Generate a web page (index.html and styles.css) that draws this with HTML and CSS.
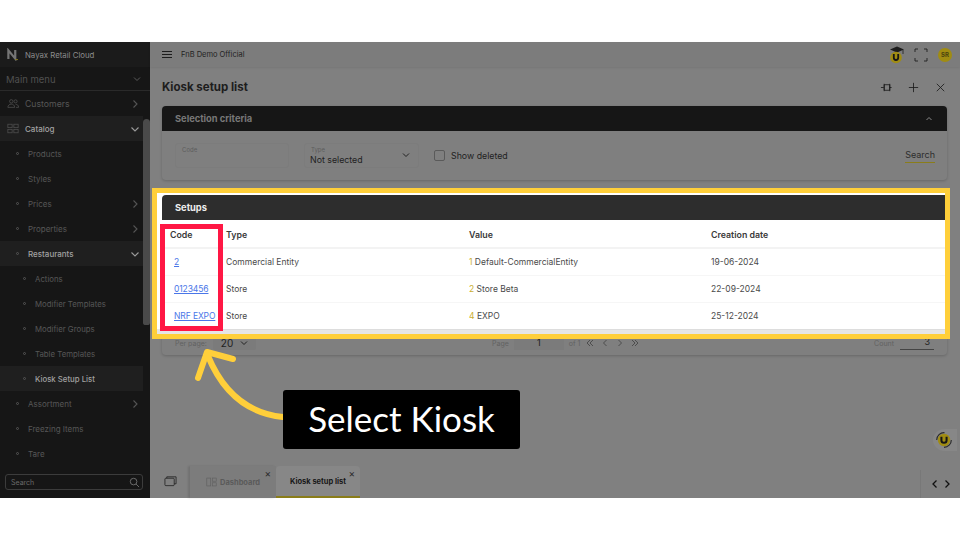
FILE: index.html
```html
<!DOCTYPE html>
<html lang="en">
<head>
<meta charset="utf-8">
<title>Kiosk setup list</title>
<link rel="stylesheet" href="styles.css">
</head>
<body>
<div class="app">
  <aside class="sidebar">
    <div class="brand">
      <svg class="brand-logo" viewBox="0 0 12 12"><path d="M1.500 11V1.500L9 10.500V1" fill="none" stroke="#757575" stroke-width="2.400"/><path d="M9 11.500h3" stroke="#8a7d1a" stroke-width="1"/></svg>
      <span>Nayax Retail Cloud</span>
    </div>
    <div class="mainmenu"><span>Main menu</span><svg class="chev" viewBox="0 0 10 10"><path d="M2 3.500l3 3 3-3"/></svg></div>
    <nav class="menu">
      <div class="item top"><svg class="mi" viewBox="0 0 14 12"><circle cx="5" cy="3.500" r="2"/><circle cx="10" cy="3.500" r="1.800"/><path d="M1 10.500c0-5 8-5 8 0zM10 7c2 0 3.500 1 3.500 3.500h-3"/></svg><span>Customers</span><svg class="arrow" viewBox="0 0 10 10"><path d="M3.500 1.500l3.500 3.500-3.500 3.500"/></svg></div>
      <div class="item top open"><svg class="mi" viewBox="0 0 14 12"><rect x="1" y="1" width="5" height="4"/><rect x="8" y="1" width="5" height="4"/><rect x="1" y="7" width="5" height="4"/><rect x="8" y="7" width="5" height="4"/></svg><span>Catalog</span><svg class="arrow bright" viewBox="0 0 10 10"><path d="M1.500 3.500l3.500 3.500 3.500-3.500"/></svg></div>
      <div class="item l1"><i></i><span>Products</span></div>
      <div class="item l1"><i></i><span>Styles</span></div>
      <div class="item l1"><i></i><span>Prices</span><svg class="arrow" viewBox="0 0 10 10"><path d="M3.500 1.500l3.500 3.500-3.500 3.500"/></svg></div>
      <div class="item l1"><i></i><span>Properties</span><svg class="arrow" viewBox="0 0 10 10"><path d="M3.500 1.500l3.500 3.500-3.500 3.500"/></svg></div>
      <div class="item l1 open"><i></i><span>Restaurants</span><svg class="arrow bright" viewBox="0 0 10 10"><path d="M1.500 3.500l3.500 3.500 3.500-3.500"/></svg></div>
      <div class="item l2"><i></i><span>Actions</span></div>
      <div class="item l2"><i></i><span>Modifier Templates</span></div>
      <div class="item l2"><i></i><span>Modifier Groups</span></div>
      <div class="item l2"><i></i><span>Table Templates</span></div>
      <div class="item l2 open"><i></i><span>Kiosk Setup List</span></div>
      <div class="item l1"><i></i><span>Assortment</span><svg class="arrow" viewBox="0 0 10 10"><path d="M3.500 1.500l3.500 3.500-3.500 3.500"/></svg></div>
      <div class="item l1"><i></i><span>Freezing Items</span></div>
      <div class="item l1"><i></i><span>Tare</span></div>
      <div class="scrollbar"></div>
    </nav>
    <div class="side-search"><span>Search</span><svg viewBox="0 0 12 12"><circle cx="5" cy="5" r="3.600"/><path d="M7.700 7.700L11 11"/></svg></div>
  </aside>
  <div class="content">
    <header class="topbar">
      <div class="burger"><b></b><b></b><b></b></div>
      <span class="org">FnB Demo Official</span>
      <div class="top-icons">
        <svg class="cap" viewBox="0 0 16 18"><path d="M1 3.500l7-3 7 3-7 3z" fill="#1d1d1d" stroke="none"/><path d="M14 4v4" stroke="#1d1d1d" stroke-width=".8"/><circle cx="7" cy="11.500" r="5.800" fill="#a08c12" stroke="none"/><path d="M4.800 8v3.800a2.200 2.200 0 004.400 0V8" fill="none" stroke="#161616" stroke-width="1.800"/></svg>
        <svg class="full" viewBox="0 0 14 14"><path d="M1 4V1h3M10 1h3v3M13 10v3h-3M4 13H1v-3"/></svg>
        <span class="avatar">SR</span>
      </div>
    </header>
    <main class="main">
      <div class="title-row">
        <h1>Kiosk setup list</h1>
        <div class="actions">
          <svg viewBox="0 0 14 14"><path d="M1 7h3M4.500 4h6v6h-6zM10.500 3v8M4.500 3v8M10.500 7h2"/></svg>
          <svg viewBox="0 0 14 14"><path d="M7 2v10M2 7h10"/></svg>
          <svg viewBox="0 0 14 14"><path d="M3 3l8 8M11 3l-8 8"/></svg>
        </div>
      </div>
      <section class="card criteria">
        <div class="card-head dark"><span>Selection criteria</span><svg viewBox="0 0 10 10"><path d="M2.500 6l2.500-2.500L7.500 6"/></svg></div>
        <div class="filters">
          <div class="field code"><label>Code</label></div>
          <div class="field type"><label>Type</label><span>Not selected</span><svg viewBox="0 0 10 10"><path d="M2 3.500l3 3 3-3"/></svg></div>
          <div class="check"><i></i><span>Show deleted</span></div>
          <span class="search-btn">Search</span>
        </div>
      </section>
      <section class="card setups">
        <div class="pager">
          <div class="pp"><span class="muted">Per page:</span><span class="pp-box">20<svg viewBox="0 0 10 10"><path d="M2 3.500l3 3 3-3"/></svg></span></div>
          <div class="pages"><span class="muted">Page</span><span class="page-box">1</span><span class="muted">of 1</span>
            <svg viewBox="0 0 10 10"><path d="M5 2L2 5l3 3M8 2L5 5l3 3"/></svg>
            <svg viewBox="0 0 10 10"><path d="M6.500 2l-3 3 3 3"/></svg>
            <svg viewBox="0 0 10 10"><path d="M3.500 2l3 3-3 3"/></svg>
            <svg viewBox="0 0 10 10"><path d="M2 2l3 3-3 3M5 2l3 3-3 3"/></svg>
          </div>
          <div class="count"><span class="muted">Count</span><span class="count-box">3</span></div>
        </div>
        <div class="spot"></div>
        <div class="card-head light"><span>Setups</span></div>
        <table class="grid">
          <thead><tr><th class="c1">Code</th><th class="c2">Type</th><th class="c3">Value</th><th>Creation date</th></tr></thead>
          <tbody>
            <tr><td class="c1"><a href="#">2</a></td><td>Commercial Entity</td><td><em>1</em> Default-CommercialEntity</td><td>19-06-2024</td></tr>
            <tr><td class="c1"><a href="#">0123456</a></td><td>Store</td><td><em>2</em> Store Beta</td><td>22-09-2024</td></tr>
            <tr><td class="c1"><a href="#">NRF EXPO</a></td><td>Store</td><td><em>4</em> EXPO</td><td>25-12-2024</td></tr>
          </tbody>
        </table>
      </section>
    </main>
    <footer class="tabs">
      <svg class="win" viewBox="0 0 14 12"><rect x="1" y="3" width="10" height="8" rx="1"/><path d="M3 3V1.500h10V9h-2"/></svg>
      <div class="tab"><svg viewBox="0 0 14 12"><rect x="1" y="1" width="5" height="10"/><rect x="8" y="1" width="5" height="4"/><rect x="8" y="7" width="5" height="4"/></svg><span>Dashboard</span><u>×</u></div>
      <div class="tab active"><span>Kiosk setup list</span><u>×</u></div>
      <div class="tab-nav"><svg viewBox="0 0 10 10"><path d="M6.500 1.500L3 5l3.500 3.500"/></svg><svg viewBox="0 0 10 10"><path d="M3.500 1.500L7 5 3.500 8.500"/></svg></div>
    </footer>
    <div class="chat"><svg viewBox="0 0 16 16"><circle cx="8" cy="8" r="5.500" fill="#a08c12" stroke="none"/><path d="M5.700 5v3.200a2.300 2.300 0 004.600 0V5" fill="none" stroke="#161616" stroke-width="1.800"/><path d="M1.500 8a6.500 6.500 0 017-6.500M14.500 8a6.500 6.500 0 01-6.500 6.500" fill="none" stroke="#2a2a2a" stroke-width="1"/></svg></div>
  </div>
  <div class="redbox"></div>
  <svg class="curve" viewBox="0 0 100 80"><path d="M93 67C55 63 32 40 18 6M8 28L17 2 43 9" fill="none" stroke="#ffcf3a" stroke-width="6" stroke-linecap="round" stroke-linejoin="round"/></svg>
  <div class="callout">Select Kiosk</div>
</div>
</body>
</html>
```
FILE: styles.css
```css
* { box-sizing: border-box; }
html, body { margin: 0; padding: 0; background: #fff; }
body { width: 960px; height: 540px; overflow: hidden; padding-top: 42px; font-family: Inter, "Liberation Sans", sans-serif; font-size: 8.5px; color: #333; }
svg { display: block; fill: none; stroke: currentColor; }
.app { position: relative; display: flex; width: 960px; height: 456px; background: #808080; }

.sidebar { width: 150px; flex: none; display: flex; flex-direction: column; background: #161616; color: #575757; }
.brand { height: 25px; display: flex; align-items: center; gap: 7px; padding-left: 7px; background: #1b1b1b; color: #8c8c8c; font-size: 7.800px; }
.brand-logo { width: 11px; height: 13px; }
.mainmenu { height: 24px; display: flex; align-items: center; justify-content: space-between; padding: 1px 8px 0 6px; border-bottom: 1px solid #2a2a2a; font-size: 9.500px; color: #505050; }
.chev { width: 10px; height: 10px; color: #5a5a5a; }
.menu { position: relative; flex: none; }
.item { position: relative; height: 25px; width: 143px; display: flex; align-items: center; font-size: 8px; }
.item.top { padding-left: 7px; gap: 6px; font-size: 8.700px; }
.mi { width: 12px; height: 11px; color: #4f4f4f; stroke-width: .9; }
.item i { width: 3px; height: 3px; border: 1px solid #555; border-radius: 50%; flex: none; }
.item.l1 { padding-left: 16px; gap: 9px; }
.item.l2 { padding-left: 23px; gap: 9px; font-size: 7.800px; }
.item.open { background: #1f1f1f; color: #a2a2a2; font-weight: 500; }
.item.top.open { font-size: 8px; }
.arrow { position: absolute; right: 3px; top: 8px; width: 10px; height: 10px; color: #555; stroke-width: 1.100; }
.arrow.bright { color: #9a9a9a; }
.scrollbar { position: absolute; left: 143px; top: 28px; width: 7px; height: 206px; background: #4a4a4a; border-radius: 4px 4px 3px 3px; }
.side-search { margin: 8px 7px 0 5px; height: 16px; display: flex; align-items: center; justify-content: space-between; padding: 0 2px 0 5px; border: 1px solid #3c3c3c; border-radius: 3px; font-size: 7px; color: #6a6a6a; }
.side-search svg { width: 11px; height: 11px; color: #707070; }

.content { position: relative; flex: 1; display: flex; flex-direction: column; min-width: 0; }
.topbar { height: 25px; flex: none; display: flex; align-items: center; padding: 0 8px 0 12px; background: #7c7c7c; color: #222; box-shadow: 0 1px 2px rgba(0,0,0,.08); }
.burger { width: 10px; display: flex; flex-direction: column; gap: 2px; margin-right: 9px; }
.burger b { height: 1px; background: #1d1d1d; }
.org { font-size: 7.500px; }
.top-icons { margin-left: auto; display: flex; align-items: center; gap: 10px; }
.cap { width: 16px; height: 18px; margin-right: -1px; }
.full { width: 14px; height: 14px; color: #1f1f1f; stroke-width: .9; }
.avatar { width: 14px; height: 14px; border-radius: 50%; background: #a08c12; color: #4a4310; font-size: 6px; font-weight: 700; display: flex; align-items: center; justify-content: center; }

.main { flex: 1; padding: 0 13px 0 12px; min-height: 0; }
.title-row { height: 39px; padding-top: 1px; display: flex; align-items: center; justify-content: space-between; }
h1 { margin: 0; font-size: 11.500px; font-weight: 700; color: #1d1d1d; }
.actions { display: flex; gap: 14px; }
.actions svg { width: 13px; height: 13px; color: #1b1b1b; stroke-width: .9; }
.card { border-radius: 4px; background: #7f7f7f; box-shadow: 0 1px 3px rgba(0,0,0,.2); }
.card-head { height: 25px; display: flex; align-items: center; justify-content: space-between; padding: 0 13px; border-radius: 4px 4px 0 0; font-size: 9.300px; font-weight: 700; }
.card-head.dark { background: #161616; color: #787878; }
.card-head svg { width: 10px; height: 10px; color: #8a8a8a; }
.criteria { height: 74px; }
.filters { height: 49px; display: flex; align-items: center; padding: 0 13px; color: #222; }
.field { position: relative; height: 25px; border: 1px solid #7c7c7c; border-radius: 3px; }
.field label { position: absolute; left: 6px; top: 2px; font-size: 6px; color: #5d5d5d; }
.field.code { width: 114px; }
.field.type { width: 115px; margin-left: 15px; }
.field.type span { position: absolute; left: 5px; top: 10px; font-size: 8.800px; }
.field.type svg { position: absolute; right: 7px; top: 6px; width: 10px; height: 10px; color: #222; }
.check { display: flex; align-items: center; gap: 6px; margin-left: 15px; font-size: 8.800px; }
.check i { width: 11px; height: 11px; border: 1px solid #5a5a5a; border-radius: 2px; }
.search-btn { margin-left: auto; margin-right: -1px; padding-bottom: 2px; border-bottom: 1px solid #8a7d1a; font-size: 9px; color: #2d2d2d; }

.setups { position: relative; height: 160px; margin-top: 15px; display: flex; flex-direction: column; }
.spot { position: absolute; left: -10px; top: -7px; right: -3px; height: 151px; background: #fff; border: 5px solid #ffcf3a; box-shadow: inset 0 -5px 0 #e6e6e6; }
.card-head.light { position: relative; flex: none; background: #2d2d2d; color: #eee; border-radius: 4px 0 0 0; margin-right: 2px; }
.grid { position: relative; width: 783px; border-collapse: collapse; table-layout: fixed; font-size: 8.500px; color: #4a4a4a; background: #fff; }
.grid th { height: 28px; padding: 2px 0 0; text-align: left; font-weight: 600; font-size: 8.800px; color: #3a3a3a; border-bottom: 2px solid #f3f3f3; }
.grid td { height: 27px; padding: 0; border-bottom: 1px solid #f6f6f6; }
.grid tbody tr:last-child td { height: 27px; border-bottom: 1px solid #ddd; }
.c1 { width: 64px; padding-left: 8px !important; }
.c2 { width: 243px; }
.c3 { width: 242px; }
td.c1 { padding-left: 12px !important; letter-spacing: -.1px; }
.grid a { color: #4a76e8; }
.grid em { font-style: normal; color: #c9ad2e; }
.pager { order: 3; height: 26px; flex: none; display: flex; align-items: center; padding: 1px 13px 0 13px; font-size: 8px; color: #333; }
.muted { color: #626262; font-size: 7px; }
.pp { display: flex; align-items: center; gap: 6px; width: 317px; }
.pp-box { display: flex; align-items: center; gap: 6px; height: 14px; padding: 0 7px 0 8px; font-size: 10px; color: #222; background: #7b7b7b; border-radius: 2px; }
.pp-box svg { width: 10px; height: 10px; }
.pages { display: flex; align-items: center; gap: 5px; }
.page-box { width: 50px; height: 14px; text-align: center; line-height: 14px; font-size: 9px; color: #1d1d1d; background: #7b7b7b; }
.pages svg { width: 10px; height: 10px; color: #4d4d4d; }
.count { margin-left: auto; display: flex; align-items: center; gap: 6px; }
.count-box { width: 34px; text-align: right; padding: 0 4px 2px 0; border-bottom: 1px solid #444; font-size: 9px; color: #222; }

.tabs { height: 32px; flex: none; display: flex; align-items: flex-end; padding-left: 14px; }
.win { width: 13px; height: 12px; color: #222; stroke-width: .9; margin: 0 13px 11px 0; }
.tab { position: relative; height: 32px; display: flex; align-items: center; justify-content: center; gap: 3px; font-size: 7.500px; font-weight: 700; color: #5a5a5a; width: 86px; background: #7c7c7c; box-shadow: -2px 0 2px rgba(0,0,0,.12); }
.tab svg { width: 11px; height: 10px; color: #5f5f5f; stroke-width: .8; }
.tab u { position: absolute; right: 5px; top: 1px; text-decoration: none; font-size: 10px; font-weight: 400; color: #2a2a2a; }
.tab.active { width: 84px; background: #878787; color: #171717; border-bottom: 2px solid #8a7d1a; box-shadow: none; border-radius: 4px 4px 0 0; }
.tab-nav { margin-left: auto; width: 40px; height: 28px; display: flex; align-items: center; justify-content: center; gap: 2px; border-left: 1px solid #787878; }
.tab-nav svg { width: 10px; height: 10px; color: #111; stroke-width: 1.300; }
.chat { position: absolute; right: 3px; top: 387px; width: 24px; height: 22px; padding: 2px 4px 2px 2px; border-radius: 50% 0 0 50%; background: #878787; }

.redbox { position: absolute; left: 160px; top: 182px; width: 63px; height: 107px; border: 5px solid #ff1744; }
.curve { position: absolute; left: 190px; top: 308px; width: 100px; height: 80px; overflow: visible; }
.callout { position: absolute; left: 283px; top: 348px; width: 237px; height: 59px; padding-bottom: 3px; display: flex; align-items: center; justify-content: center; background: #000; color: #fff; border-radius: 3px; font-family: Lato, sans-serif; font-size: 35px; }
```
